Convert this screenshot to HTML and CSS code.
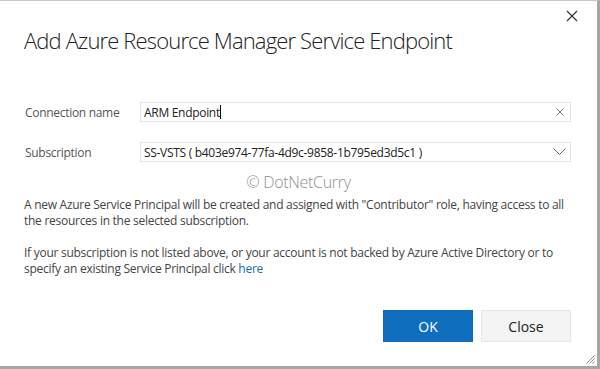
FILE: index.html
```html
<!DOCTYPE html>
<html>
<head>
<meta charset="utf-8">
<link rel="stylesheet" href="styles.css">
</head>
<body>
<div class="dialog">
  <div class="topbar">
    <svg class="close-x" width="12" height="12" viewBox="0 0 12 12"><path d="M1 1L11 11M11 1L1 11" stroke="#333" stroke-width="1.2" fill="none"/></svg>
  </div>
  <h1 class="title">Add Azure Resource Manager Service Endpoint</h1>
  <div class="form">
    <div class="row">
      <div class="label">Connection name</div>
      <div class="field">
        <span class="value">ARM Endpoint<span class="caret"></span></span>
        <svg class="clear" width="8" height="8" viewBox="0 0 8 8"><path d="M0.5 0.5L7.5 7.5M7.5 0.5L0.5 7.5" stroke="#777" stroke-width="1" fill="none"/></svg>
      </div>
    </div>
    <div class="row">
      <div class="label">Subscription</div>
      <div class="field">
        <span class="value">SS-VSTS ( b403e974-77fa-4d9c-9858-1b795ed3d5c1 )</span>
        <svg class="chev" width="13" height="8" viewBox="0 0 13 8"><path d="M0.5 0.5L6.5 6.5L12.5 0.5" stroke="#666" stroke-width="1" fill="none"/></svg>
      </div>
    </div>
  </div>
  <div class="watermark">© DotNetCurry</div>
  <p class="text">A new Azure Service Principal will be created and assigned with "Contributor" role, having access to all the resources in the selected subscription.</p>
  <p class="text">If your subscription is not listed above, or your account is not backed by Azure Active Directory or to specify an existing Service Principal click <a class="link">here</a></p>
  <div class="spacer"></div>
  <div class="buttons">
    <div class="btn primary">OK</div>
    <div class="btn secondary">Close</div>
  </div>
  <svg class="grip" width="9" height="9" viewBox="0 0 9 9"><path d="M8.5 0.5L0.5 8.5M8.5 3.5L3.5 8.5M8.5 6.5L6.5 8.5" stroke="#8a8a9a" stroke-width="1" fill="none"/></svg>
</div>
</body>
</html>
```
FILE: styles.css
```css
html, body {
  margin: 0;
  padding: 0;
  background: #ffffff;
}
body {
  width: 600px;
  height: 369px;
  overflow: hidden;
  font-family: "Open Sans", "Noto Sans", sans-serif;
}
.dialog {
  position: relative;
  box-sizing: border-box;
  width: 600px;
  height: 369px;
  background: #fff;
  border-top: 1px solid #c8c8c8;
  border-right: 3px solid #a6a6a6;
  border-bottom: 3px solid #a6a6a6;
  display: flex;
  flex-direction: column;
  padding: 0 26px 0 24px;
}
.topbar {
  height: 9px;
  display: flex;
  justify-content: flex-end;
}
.close-x {
  position: absolute;
  top: 9px;
  right: 19px;
}
.title {
  margin: 14px 0 0 0;
  font-weight: 300;
  font-size: 22px;
  line-height: 32px;
  color: #222;
  letter-spacing: -0.85px;
}
.form {
  margin-top: 46px;
  display: flex;
  flex-direction: column;
  gap: 20px;
}
.row {
  display: flex;
  align-items: center;
  height: 20px;
}
.label {
  width: 115px;
  padding-left: 1px;
  font-size: 12px;
  letter-spacing: -0.3px;
  color: #555;
}
.field {
  flex: 1;
  box-sizing: border-box;
  height: 20px;
  border: 1px solid #e3e3e3;
  display: flex;
  align-items: center;
  justify-content: space-between;
  padding: 0 4px 0 3px;
  font-size: 12px;
  letter-spacing: -0.3px;
  color: #222;
}
.value {
  display: inline-flex;
  align-items: center;
}
.caret {
  display: inline-block;
  width: 1px;
  height: 14px;
  background: #111;
}
.clear { margin-right: 2px; }
.watermark {
  margin-top: 11px;
  text-align: center;
  font-size: 16px;
  font-weight: 300;
  letter-spacing: -0.3px;
  color: #8f8f8f;
  line-height: 18px;
  padding-left: 2px;
}
.text {
  margin: 6px 0 0 0;
  font-size: 12px;
  letter-spacing: -0.27px;
  line-height: 16px;
  color: #444;
}
.text + .text {
  margin-top: 16px;
}
.link {
  color: #106ebe;
}
.spacer { flex: 1; }
.buttons {
  display: flex;
  justify-content: flex-end;
  gap: 8px;
  margin-bottom: 24px;
  padding-right: 0;
}
.btn {
  box-sizing: border-box;
  width: 90px;
  height: 32px;
  display: flex;
  align-items: center;
  justify-content: center;
  font-size: 14px;
}
.primary {
  background: #106ebe;
  color: #fff;
}
.secondary {
  background: #f4f4f4;
  border: 1px solid #e6e6e6;
  color: #222;
}
.grip {
  position: absolute;
  right: 2px;
  bottom: 2px;
}
```
